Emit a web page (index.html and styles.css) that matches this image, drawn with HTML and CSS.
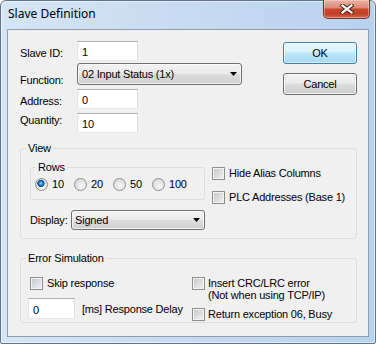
FILE: index.html
```html
<!DOCTYPE html>
<html lang="en">
<head>
    <meta charset="UTF-8">
    <meta name="viewport" content="width=device-width, initial-scale=1.0">
    <title>Slave Definition</title>
    <link rel="stylesheet" href="styles.css">
</head>
<body>
    <div class="window">
        <div class="title-bar">
            <span class="title">Slave Definition</span>
            <div class="close-btn">
                <svg width="14" height="10" viewBox="0 0 14 10">
                    <path d="M2.5 1.5 L11.5 8.5 M11.5 1.5 L2.5 8.5" stroke="#4a2a24" stroke-width="4.2" stroke-linecap="square"/>
                    <path d="M2.5 1.5 L11.5 8.5 M11.5 1.5 L2.5 8.5" stroke="#fff" stroke-width="2.2" stroke-linecap="square"/>
                </svg>
            </div>
        </div>

        <div class="client">
            <div class="top">
                <div class="fields">
                    <div class="field-row row-slave">
                        <span class="field-label">Slave ID:</span>
                        <input class="textbox" type="text" value="1">
                    </div>
                    <div class="field-row row-function">
                        <span class="field-label">Function:</span>
                        <div class="combo function-combo">
                            <span>02 Input Status (1x)</span>
                            <svg class="arrow" width="7" height="4" viewBox="0 0 7 4"><path d="M0 0 H7 L3.5 4 Z" fill="#000"/></svg>
                        </div>
                    </div>
                    <div class="field-row row-address">
                        <span class="field-label">Address:</span>
                        <input class="textbox" type="text" value="0">
                    </div>
                    <div class="field-row row-quantity">
                        <span class="field-label">Quantity:</span>
                        <input class="textbox" type="text" value="10">
                    </div>
                </div>
                <div class="buttons">
                    <div class="btn btn-default">OK</div>
                    <div class="btn">Cancel</div>
                </div>
            </div>

            <div class="group view-group">
                <span class="group-title">View</span>
                <div class="view-body">
                    <div class="view-left">
                        <div class="group rows-group">
                            <span class="group-title">Rows</span>
                            <div class="radio-row">
                                <label class="radio checked"><span class="radio-mark"></span>10</label>
                                <label class="radio"><span class="radio-mark"></span>20</label>
                                <label class="radio"><span class="radio-mark"></span>50</label>
                                <label class="radio"><span class="radio-mark"></span>100</label>
                            </div>
                        </div>
                        <div class="display-row">
                            <span class="display-label">Display:</span>
                            <div class="combo display-combo">
                                <span>Signed</span>
                                <svg class="arrow" width="7" height="4" viewBox="0 0 7 4"><path d="M0 0 H7 L3.5 4 Z" fill="#000"/></svg>
                            </div>
                        </div>
                    </div>
                    <div class="view-right">
                        <label class="check"><span class="check-mark"></span>Hide Alias Columns</label>
                        <label class="check"><span class="check-mark"></span>PLC Addresses (Base 1)</label>
                    </div>
                </div>
            </div>

            <div class="group error-group">
                <span class="group-title">Error Simulation</span>
                <div class="error-body">
                    <div class="error-left">
                        <label class="check skip-check"><span class="check-mark"></span>Skip response</label>
                        <div class="delay-row">
                            <input class="textbox delay-box" type="text" value="0">
                            <span class="delay-label">[ms] Response Delay</span>
                        </div>
                    </div>
                    <div class="error-right">
                        <label class="check check-multi"><span class="check-mark"></span><span>Insert CRC/LRC error<br>(Not when using TCP/IP)</span></label>
                        <label class="check check-busy"><span class="check-mark"></span>Return exception 06, Busy</label>
                    </div>
                </div>
            </div>
        </div>
    </div>
</body>
</html>
```

FILE: styles.css
```css
* {
    margin: 0;
    padding: 0;
    box-sizing: border-box;
}
body {
    width: 376px;
    height: 344px;
    overflow: hidden;
    font-family: "Liberation Sans", Arial, sans-serif;
    font-size: 11px;
    letter-spacing: -0.2px;
    color: #000;
    background: #fff;
}
.window {
    width: 376px;
    height: 344px;
    display: flex;
    flex-direction: column;
    border: 1px solid #5d7391;
    border-radius: 6px 6px 2px 2px;
    background: linear-gradient(to right, #d5e5f5, #c7dcf2 45%, #b8d1ed);
    box-shadow: inset 0 0 0 1px rgba(255, 255, 255, 0.55);
}
.title-bar {
    height: 28px;
    display: flex;
    align-items: flex-start;
    padding-left: 7px;
}
.title {
    font-family: "Noto Sans", "Liberation Sans", sans-serif;
    font-size: 12px;
    letter-spacing: 0;
    line-height: 16px;
    margin-top: 5px;
}
.close-btn {
    margin-left: auto;
    margin-right: 5px;
    margin-top: -1px;
    width: 47px;
    height: 19px;
    display: flex;
    align-items: center;
    justify-content: center;
    border: 1px solid #7a3326;
    border-top: none;
    border-radius: 0 0 5px 5px;
    background: linear-gradient(#eab2a4 0%, #dd8b79 42%, #c8462e 52%, #c23f26 78%, #d5684d 100%);
    box-shadow: inset 0 0 0 1px rgba(255, 220, 210, 0.45);
}
.client {
    margin: 0 6px;
    height: 308px;
    border: 1px solid #8b9db4;
    background: #f0f0f0;
    padding: 11px 11px 0 12px;
}

/* верхняя часть с полями */
.top {
    display: flex;
    justify-content: space-between;
}
.fields {
    display: flex;
    flex-direction: column;
}
.field-row {
    display: flex;
    align-items: flex-start;
    height: 20px;
}
.field-label {
    width: 57px;
    line-height: 13px;
}
.row-slave .field-label {
    margin-top: 6px;
}
.row-function {
    height: 22px;
    margin-top: 2px;
}
.row-function .field-label {
    margin-top: 11px;
}
.row-address {
    margin-top: 4px;
}
.row-address .field-label {
    margin-top: 6px;
}
.row-quantity {
    margin-top: 4px;
}
.row-quantity .field-label {
    margin-top: 1px;
}
.textbox {
    width: 61px;
    height: 20px;
    border: 1px solid;
    border-color: #abadb3 #dbdfe6 #e3e9ef #e2e3ea;
    background: #fff;
    font: inherit;
    letter-spacing: inherit;
    color: #000;
    padding: 2px 0 0 4px;
    outline: none;
}
.combo {
    display: flex;
    align-items: center;
    justify-content: space-between;
    border: 1px solid #707070;
    border-radius: 3px;
    background: linear-gradient(#f2f2f2, #ebebeb 50%, #dddddd 50%, #cfcfcf);
    box-shadow: inset 0 0 0 1px rgba(255, 255, 255, 0.7);
    padding: 0 4px 0 4px;
}
.function-combo {
    width: 165px;
    height: 22px;
}
.buttons {
    display: flex;
    flex-direction: column;
    gap: 9px;
    margin-top: 1px;
}
.btn {
    width: 74px;
    height: 22px;
    display: flex;
    align-items: center;
    justify-content: center;
    border: 1px solid #707070;
    border-radius: 3px;
    background: linear-gradient(#f2f2f2 0%, #ebebeb 45%, #dddddd 50%, #cfcfcf 100%);
    box-shadow: inset 0 0 0 1px rgba(255, 255, 255, 0.75);
}
.btn-default {
    border-color: #3c7fb1;
    background: linear-gradient(#eaf6fd 0%, #d9f0fc 45%, #bee6fd 50%, #a7d9f5 100%);
    box-shadow: inset 0 0 0 1px rgba(255, 255, 255, 0.6);
}

/* групповые рамки */
.group {
    border: 1px solid #d5dfe5;
    border-radius: 3px;
}
.group-title {
    display: block;
    width: fit-content;
    margin: -7px 0 0 5px;
    padding: 0 2px;
    line-height: 13px;
    background: #f0f0f0;
}
.view-group {
    margin-top: 15px;
}
.view-body {
    display: flex;
    padding: 12px 0 8px 9px;
}
.rows-group {
    width: 175px;
}
.radio-row {
    display: flex;
    padding: 4px 0 8px 4px;
}
.radio {
    display: flex;
    align-items: center;
    width: 39px;
    line-height: 13px;
}
.radio-mark {
    width: 13px;
    height: 13px;
    margin-right: 4px;
    border: 1px solid #8f8f8f;
    border-radius: 50%;
    background: radial-gradient(circle at 60% 65%, #f7f7f7, #d2d2d2);
}
.radio.checked .radio-mark {
    background:
        radial-gradient(circle at 45% 40%, #a9dcf7 0, #2f8ad0 1.6px, #0f4e8e 3.4px, rgba(15, 78, 142, 0) 3.9px),
        radial-gradient(circle at 60% 65%, #f7f7f7, #d2d2d2);
}
.display-row {
    display: flex;
    align-items: center;
    margin-top: 10px;
}
.display-label {
    width: 41px;
}
.display-combo {
    width: 134px;
    height: 20px;
    padding-left: 3px;
}
.view-right {
    display: flex;
    flex-direction: column;
    gap: 11px;
    margin-left: 7px;
}
.check {
    display: flex;
    align-items: center;
    line-height: 13px;
}
.check-mark {
    flex: none;
    width: 13px;
    height: 13px;
    margin-right: 4px;
    border: 1px solid #8f8f8f;
    background: linear-gradient(135deg, #c3c5c8, #f3f3f3);
    box-shadow: inset 0 0 0 1px #f4f4f4;
}
.error-group {
    margin-top: 19px;
}
.error-body {
    display: flex;
    padding: 12px 0 1px 7px;
}
.error-left {
    width: 164px;
}
.skip-check {
    margin-left: 2px;
}
.delay-row {
    display: flex;
    align-items: center;
    margin-top: 8px;
}
.delay-box {
    width: 47px;
    height: 21px;
}
.delay-label {
    margin-left: 7px;
}
.error-right .check-mark {
    margin-right: 3px;
}
.check-multi {
    align-items: flex-start;
    line-height: 12px;
}
.check-busy {
    margin-top: 7px;
}
```
